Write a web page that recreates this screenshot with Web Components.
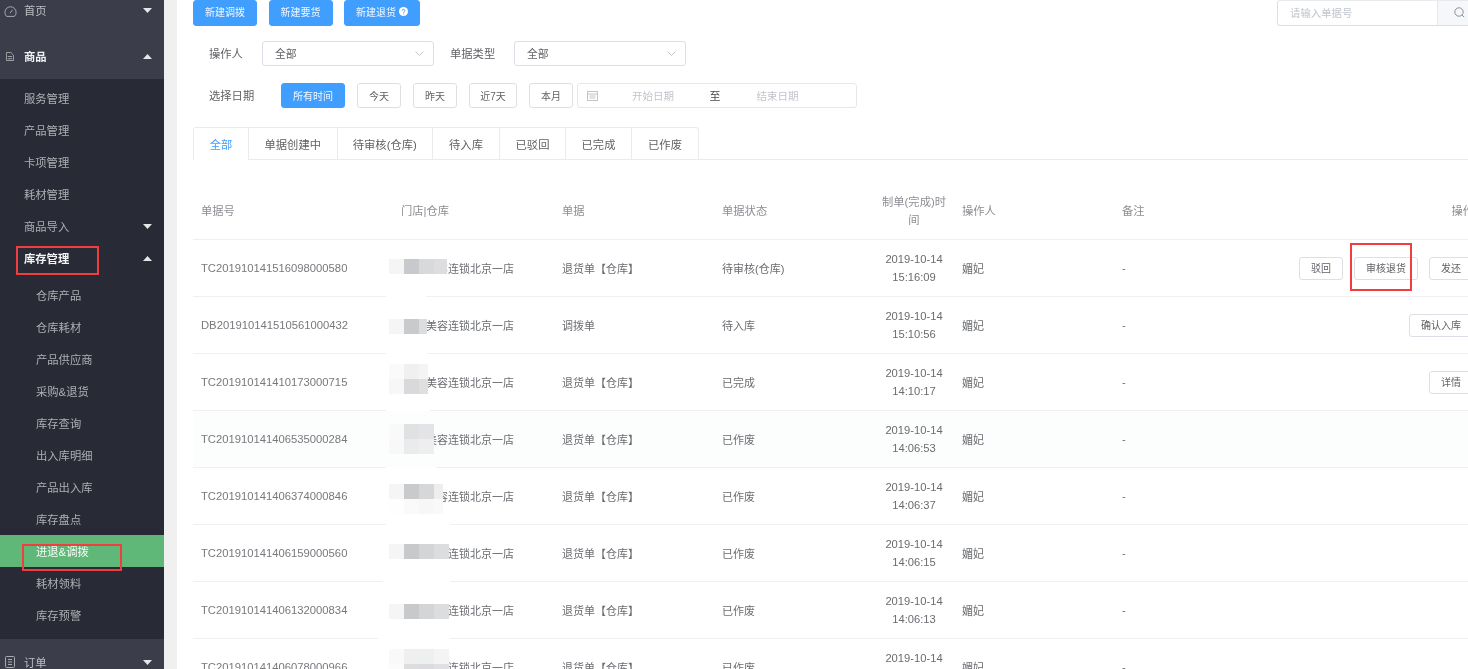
<!DOCTYPE html>
<html lang="zh">
<head>
<meta charset="utf-8">
<title>进退&调拨</title>
<style>
html, body { margin: 0; height: 669px; overflow: hidden; background: #f0f0f1; }
body {
    font-family: "Liberation Sans", "Noto Sans CJK SC", sans-serif;
    color: #606266;
    filter: blur(.5px);
}
#app { display: flex; height: 669px; position: relative; overflow: hidden; }
</style>
</head>
<body>
<div id="app">
    <side-menu>
        <menu-head icon="gauge" caret="down" style="margin-top:-12px;height:45px">首页</menu-head>
        <menu-head icon="doc" caret="up" open>商品</menu-head>
        <menu-group>
            <menu-link>服务管理</menu-link>
            <menu-link>产品管理</menu-link>
            <menu-link>卡项管理</menu-link>
            <menu-link>耗材管理</menu-link>
            <menu-link caret="down">商品导入</menu-link>
            <menu-link caret="up" open>库存管理</menu-link>
            <menu-sub>
                <menu-link deep>仓库产品</menu-link>
                <menu-link deep>仓库耗材</menu-link>
                <menu-link deep>产品供应商</menu-link>
                <menu-link deep>采购&amp;退货</menu-link>
                <menu-link deep>库存查询</menu-link>
                <menu-link deep>出入库明细</menu-link>
                <menu-link deep>产品出入库</menu-link>
                <menu-link deep>库存盘点</menu-link>
                <menu-link deep active>进退&amp;调拨</menu-link>
                <menu-link deep>耗材领料</menu-link>
                <menu-link deep>库存预警</menu-link>
            </menu-sub>
        </menu-group>
        <menu-head icon="list" caret="down">订单</menu-head>
    </side-menu>

    <main-pane>
        <tool-bar>
            <ui-btn primary style="padding-bottom:2px">新建调拨</ui-btn>
            <ui-btn primary style="padding-bottom:2px">新建要货</ui-btn>
            <ui-btn primary help style="padding-bottom:2px">新建退货</ui-btn>
            <search-box slot="end" placeholder="请输入单据号"></search-box>
        </tool-bar>
        <filter-row style="margin-top:16px">
            <filter-label style="width:53px">操作人</filter-label>
            <ui-select value="全部"></ui-select>
            <filter-label style="width:64px;margin-left:16px">单据类型</filter-label>
            <ui-select value="全部"></ui-select>
        </filter-row>
        <filter-row gap>
            <filter-label style="width:60px">选择日期</filter-label>
            <ui-btn primary>所有时间</ui-btn>
            <ui-btn>今天</ui-btn>
            <ui-btn>昨天</ui-btn>
            <ui-btn style="width:48px">近7天</ui-btn>
            <ui-btn>本月</ui-btn>
            <date-range></date-range>
        </filter-row>
        <tab-bar>
            <tab-item active>全部</tab-item>
            <tab-item>单据创建中</tab-item>
            <tab-item>待审核(仓库)</tab-item>
            <tab-item>待入库</tab-item>
            <tab-item>已驳回</tab-item>
            <tab-item>已完成</tab-item>
            <tab-item>已作废</tab-item>
        </tab-bar>
        <bill-table>
            <bill-row no="TC201910141516098000580" type="退货单【仓库】" state="待审核(仓库)" day="2019-10-14" time="15:16:09"
                mask="19|58|f5f5f5,c8c9cc,d8d9db,dddddf" cut="386,40">
                <ui-btn small>驳回</ui-btn><ui-btn small>审核退货</ui-btn><ui-btn small>发还</ui-btn>
            </bill-row>
            <bill-row no="DB201910141510561000432" type="调拨单" state="待入库" day="2019-10-14" time="15:10:56"
                mask="22|38|f5f5f5,c9cacc,dcdde0" cut="386,41">
                <ui-btn small>确认入库</ui-btn>
            </bill-row>
            <bill-row no="TC201910141410173000715" type="退货单【仓库】" state="已完成" day="2019-10-14" time="14:10:17"
                mask="10|39|fafafa,f0f0f1,f4f4f4;f7f7f7,d9d9db,dfdfe0" cut="386,44">
                <ui-btn small>详情</ui-btn>
            </bill-row>
            <bill-row no="TC201910141406535000284" type="退货单【仓库】" state="已作废" day="2019-10-14" time="14:06:53" tint
                mask="13|45|f9f9f9,e0e1e3,e4e4e6;f8f8f8,eaebec,eeeeef" cut="386,50"></bill-row>
            <bill-row no="TC201910141406374000846" type="退货单【仓库】" state="已作废" day="2019-10-14" time="14:06:37"
                mask="16|54|f5f5f5,c9cacc,d6d7d9,eeeeee;fefefe,fafafa,f7f7f7,f9f9f9" cut="386,64"></bill-row>
            <bill-row no="TC201910141406159000560" type="退货单【仓库】" state="已作废" day="2019-10-14" time="14:06:15"
                mask="19|61|f5f5f5,c8c9cb,d4d5d7,dcdddf" cut="383,67"></bill-row>
            <bill-row no="TC201910141406132000834" type="退货单【仓库】" state="已作废" day="2019-10-14" time="14:06:13"
                mask="22|61|f5f5f5,c8c9cb,d4d5d7,dcdddf" cut="378,72"></bill-row>
            <bill-row no="TC201910141406078000966" type="退货单【仓库】" state="已作废" day="2019-10-14" time="14:06:08"
                mask="10|61|f9f9f9,eeefef,eeefef,f4f4f4;fbfbfb,dddddf,dcdcde,e0e0e2"></bill-row>
        </bill-table>
    </main-pane>

    <mark-box x="16" y="246" w="83" h="29"></mark-box>
    <mark-box x="1350" y="243" w="62" h="48"></mark-box>
    <mark-box x="22" y="544" w="100" h="27"></mark-box>
</div>

<script>
// small shared bits for the menu rows
const caretSvg = (dir) => `<svg class="caret" width="9" height="5" viewBox="0 0 9 5">
    <path d="${dir === 'up' ? 'M4.5 0 9 5H0z' : 'M0 0h9L4.5 5z'}" fill="currentColor"/></svg>`;

const menuIcons = {
    gauge: `<svg width="13" height="13" viewBox="0 0 13 13" fill="none" stroke="#a9aab0" stroke-width="1" style="margin-top:2px">
        <path d="M2.6 11.4A5.6 5.6 0 1 1 10.4 11.4Z"/><path d="M6 8.2 8.6 4.8" /></svg>`,
    doc: `<svg width="8" height="9" viewBox="0 0 9 10" fill="none" stroke="#a9aab0" stroke-width="1">
        <path d="M.5.5h5l3 3v6h-8z"/><path d="M2 5h5M2 7.5h5"/></svg>`,
    list: `<svg width="10" height="12" viewBox="0 0 10 12" fill="none" stroke="#a9aab0" stroke-width="1">
        <rect x=".5" y=".5" width="9" height="11" rx="1"/><path d="M3 3.5h4M3 6h4M3 8.5h4"/></svg>`
};

class SideMenu extends HTMLElement {
    constructor() {
        super();
        this.attachShadow({ mode: 'open' });
        this.shadowRoot.innerHTML = `
        <style>
            :host {
                display: flex;
                flex-direction: column;
                flex: 0 0 164px;
                width: 164px;
                height: 669px;
                overflow: hidden;
                background: #282a35;
                font-size: 11.3px;
            }
        </style>
        <slot></slot>`;
    }
}

class MenuHead extends HTMLElement {
    constructor() {
        super();
        this.attachShadow({ mode: 'open' });
        const icon = menuIcons[this.getAttribute('icon')] || '';
        this.shadowRoot.innerHTML = `
        <style>
            :host {
                display: flex;
                flex: none;
                align-items: center;
                height: 46px;
                background: #3b3d4b;
                color: #bdbec3;
            }
            :host([open]) { color: #f0f0f2; font-weight: bold; }
            .ico { display: flex; justify-content: center; width: 24px; margin-left: -2px; margin-right: 2px; }
            .txt { flex: 1; padding-bottom: 1px; }
            .caret { margin-right: 12px; color: #e6e6e9; }
        </style>
        <span class="ico">${icon}</span><span class="txt"><slot></slot></span>${caretSvg(this.getAttribute('caret'))}`;
    }
}

class MenuGroup extends HTMLElement {
    constructor() {
        super();
        this.attachShadow({ mode: 'open' });
        this.shadowRoot.innerHTML = `
        <style>:host { display: block; flex: none; padding-top: 3px; }</style>
        <slot></slot>`;
    }
}

class MenuSub extends HTMLElement {
    constructor() {
        super();
        this.attachShadow({ mode: 'open' });
        this.shadowRoot.innerHTML = `
        <style>:host { display: block; padding: 5px 0 8px; }</style>
        <slot></slot>`;
    }
}

class MenuLink extends HTMLElement {
    constructor() {
        super();
        this.attachShadow({ mode: 'open' });
        const caret = this.getAttribute('caret');
        this.shadowRoot.innerHTML = `
        <style>
            :host {
                display: flex;
                align-items: center;
                height: 32px;
                padding-left: 24px;
                color: #aeafb4;
            }
            :host([deep]) { padding-left: 36px; }
            :host([open]) { color: #f4f4f6; font-weight: bold; }
            :host([active]) { background: #60b878; color: #f6fbf7; }
            .txt { flex: 1; padding-bottom: 1px; }
            .caret { margin-right: 12px; color: #e6e6e9; }
        </style>
        <span class="txt"><slot></slot></span>${caret ? caretSvg(caret) : ''}`;
    }
}

class MainPane extends HTMLElement {
    constructor() {
        super();
        this.attachShadow({ mode: 'open' });
        this.shadowRoot.innerHTML = `
        <style>
            :host {
                display: block;
                flex: 1;
                min-width: 0;
                margin-left: 13px;
                padding-left: 16px;
                background: #fff;
                overflow: hidden;
                font-size: 11.3px;
            }
            .inner { width: 1289px; }
        </style>
        <div class="inner"><slot></slot></div>`;
    }
}

class ToolBar extends HTMLElement {
    constructor() {
        super();
        this.attachShadow({ mode: 'open' });
        this.shadowRoot.innerHTML = `
        <style>
            :host { display: flex; justify-content: space-between; height: 25px; }
            .left { display: flex; gap: 11.5px; }
        </style>
        <div class="left"><slot></slot></div><slot name="end"></slot>`;
    }
}

class UiBtn extends HTMLElement {
    constructor() {
        super();
        this.attachShadow({ mode: 'open' });
        const help = this.hasAttribute('help') ? `<svg width="9" height="9" viewBox="0 0 9 9" style="margin-left:3px">
            <circle cx="4.5" cy="4.5" r="4.5" fill="#fff"/>
            <path d="M3.2 3.6a1.3 1.3 0 1 1 1.9 1.2c-.4.2-.6.4-.6.8M4.5 6.6v.8" fill="none" stroke="#409eff" stroke-width="1"/></svg>` : '';
        this.shadowRoot.innerHTML = `
        <style>
            :host {
                display: inline-flex;
                box-sizing: border-box;
                align-items: center;
                justify-content: center;
                height: 25.5px;
                padding: 0 11px 1px;
                border: 1px solid #dcdfe6;
                border-radius: 3px;
                background: #fff;
                color: #606266;
                font-size: 10px;
                white-space: nowrap;
            }
            :host([primary]) { background: #409eff; border-color: #409eff; color: #f2f8ff; }
            :host([small]) { height: 23px; }
        </style>
        <slot></slot>${help}`;
    }
}

class SearchBox extends HTMLElement {
    constructor() {
        super();
        this.attachShadow({ mode: 'open' });
        this.shadowRoot.innerHTML = `
        <style>
            :host { display: flex; box-sizing: border-box; width: 205px; height: 25.5px; border: 1px solid #dcdfe6; border-top-color: #e8eaee; border-radius: 3px; font-size: 10.4px; }
            .ph { flex: 1; display: flex; align-items: center; padding: 0 0 1px 12px; color: #c0c4cc; }
            .add { display: flex; align-items: center; width: 44px; padding-left: 16px; box-sizing: border-box; background: #f5f7fa; border-left: 1px solid #e4e7ed; }
        </style>
        <div class="ph">${this.getAttribute('placeholder')}</div>
        <div class="add"><svg width="11" height="11" viewBox="0 0 11 11" fill="none" stroke="#8d9095" stroke-width="1">
            <circle cx="5" cy="5" r="4.2"/><path d="M8 8l2.2 2.2"/></svg></div>`;
    }
}

class FilterRow extends HTMLElement {
    constructor() {
        super();
        this.attachShadow({ mode: 'open' });
        this.shadowRoot.innerHTML = `
        <style>
            :host { display: flex; align-items: center; height: 25px; margin-top: 17px; padding-left: 16px; }
            :host([gap]) { gap: 12px; }
        </style>
        <slot></slot>`;
    }
}

class FilterLabel extends HTMLElement {
    constructor() {
        super();
        this.attachShadow({ mode: 'open' });
        this.shadowRoot.innerHTML = `
        <style>:host { display: block; flex: none; color: #606266; padding-bottom: 1px; }</style>
        <slot></slot>`;
    }
}

class UiSelect extends HTMLElement {
    constructor() {
        super();
        this.attachShadow({ mode: 'open' });
        this.shadowRoot.innerHTML = `
        <style>
            :host {
                display: flex;
                box-sizing: border-box;
                align-items: center;
                justify-content: space-between;
                width: 172px;
                height: 25px;
                padding: 0 9px 1px 12px;
                border: 1px solid #dcdfe6;
                border-radius: 3px;
                font-size: 10.8px;
            }
        </style>
        <span>${this.getAttribute('value')}</span>
        <svg width="9" height="5" viewBox="0 0 9 5" fill="none" stroke="#c0c4cc" stroke-width="1"><path d="M.5.5l4 4 4-4"/></svg>`;
    }
}

class DateRange extends HTMLElement {
    constructor() {
        super();
        this.attachShadow({ mode: 'open' });
        this.shadowRoot.innerHTML = `
        <style>
            :host {
                display: flex;
                box-sizing: border-box;
                align-items: center;
                width: 280px;
                height: 25px;
                margin-left: -8px;
                padding: 0 0 1px 9px;
                border: 1px solid #e4e7ed;
                border-radius: 3px;
                font-size: 10.5px;
                color: #c0c4cc;
            }
            .a { margin-left: 34px; }
            .to { margin-left: 35.5px; color: #4a4c50; font-size: 11px; padding-bottom: 1px; }
            .b { margin-left: 36px; }
        </style>
        <svg width="11" height="11" viewBox="0 0 11 11" fill="none" stroke="#c0c4cc" stroke-width="1">
            <rect x=".5" y="1.5" width="10" height="9"/><path d="M.5 4h10M2.5 6h6M2.5 8h6"/></svg>
        <span class="a">开始日期</span><span class="to">至</span><span class="b">结束日期</span>`;
    }
}

class TabBar extends HTMLElement {
    constructor() {
        super();
        this.attachShadow({ mode: 'open' });
        this.shadowRoot.innerHTML = `
        <style>
            :host {
                display: grid;
                box-sizing: border-box;
                grid-template-columns: 56px 88.5px 95.5px 67px 66px 66px 67px 1fr;
                height: 33px;
                margin-top: 19px;
                border-bottom: 1px solid #e9ebef;
            }
        </style>
        <slot></slot>`;
    }
}

class TabItem extends HTMLElement {
    constructor() {
        super();
        this.attachShadow({ mode: 'open' });
        this.shadowRoot.innerHTML = `
        <style>
            :host {
                display: flex;
                box-sizing: border-box;
                align-items: center;
                justify-content: center;
                height: 33px;
                padding-bottom: 1px;
                border-top: 1px solid #e9ebef;
                border-right: 1px solid #e9ebef;
                color: #5f6165;
            }
            :host(:first-child) { border-left: 1px solid #e9ebef; border-top-left-radius: 3px; }
            :host(:nth-child(7)) { border-top-right-radius: 3px; }
            :host([active]) { color: #409eff; background: #fff; }
        </style>
        <slot></slot>`;
    }
}

// column widths shared by the head and the rows
const billColumns = '200px 161px 160px 160px 80px 160px 160px 208px';

class BillTable extends HTMLElement {
    constructor() {
        super();
        this.attachShadow({ mode: 'open' });
        this.shadowRoot.innerHTML = `
        <style>
            :host { display: block; }
            .head {
                display: grid;
                grid-template-columns: ${billColumns};
                align-items: center;
                box-sizing: border-box;
                height: 80px;
                padding-top: 22px;
                border-bottom: 1px solid #eef0f4;
                color: #8c8e93;
                line-height: 18px;
            }
            .head > div { padding: 0 8px; }
            .mid { text-align: center; }
            .end { text-align: right; }
        </style>
        <div class="head">
            <div>单据号</div><div>门店|仓库</div><div>单据</div><div>单据状态</div>
            <div class="mid">制单(完成)时间</div><div>操作人</div><div>备注</div><div class="end">操作</div>
        </div>
        <slot></slot>`;
    }
}

class BillRow extends HTMLElement {
    constructor() {
        super();
        this.attachShadow({ mode: 'open' });
        const a = (n) => this.getAttribute(n) || '';
        this.shadowRoot.innerHTML = `
        <style>
            :host {
                display: grid;
                grid-template-columns: ${billColumns};
                align-items: center;
                position: relative;
                box-sizing: border-box;
                height: 57px;
                padding-bottom: 1px;
                border-bottom: 1px solid #eef0f4;
                color: #6a6c70;
                font-size: 11px;
            }
            :host([tint]) { background: #fcfdfd; }
            .c { padding: 0 8px; }
            .no { font-size: 11.25px; color: #77797d; white-space: nowrap; }
            .store { width: 113px; text-align: right; white-space: nowrap; }
            .time { text-align: center; line-height: 18px; font-size: 11.2px; }
            .ops { display: flex; justify-content: flex-end; gap: 11px; padding: 1px 9px 0 0; }
            pixel-mask { position: absolute; }
            .cut { position: absolute; bottom: -1px; height: 1px; background: #fff; }
        </style>
        <div class="c no">${a('no')}</div>
        <div class="c"><div class="store">美容连锁北京一店</div></div>
        <div class="c">${a('type')}</div>
        <div class="c">${a('state')}</div>
        <div class="time">${a('day')}<br>${a('time')}</div>
        <div class="c">媚妃</div>
        <div class="c">-</div>
        <div class="ops"><slot></slot></div>`;
        const [top, width, cells] = a('mask').split('|');
        const mask = document.createElement('pixel-mask');
        mask.setAttribute('cells', cells);
        mask.style.cssText = `left:196px;top:${top}px;width:${width}px`;
        this.shadowRoot.append(mask);
        if (a('cut')) {
            const [x, w] = a('cut').split(',');
            const cut = document.createElement('div');
            cut.className = 'cut';
            cut.style.cssText = `left:${x - 193}px;width:${w}px`;
            this.shadowRoot.append(cut);
        }
    }
}

// mosaic that hides part of the shop name
class PixelMask extends HTMLElement {
    constructor() {
        super();
        this.attachShadow({ mode: 'open' });
    }

    connectedCallback() {
        const rows = this.getAttribute('cells').split(';').map((r) => r.split(','));
        const html = rows.map((r) => `<div class="r">${r.map((c) => `<i style="background:#${c}"></i>`).join('')}</div>`).join('');
        this.shadowRoot.innerHTML = `
        <style>
            :host { display: block; overflow: hidden; }
            .r { display: flex; height: 15px; }
            i { flex: 0 0 15px; }
        </style>
        ${html}`;
    }
}

// red annotation frames drawn on top of the screenshot
class MarkBox extends HTMLElement {
    constructor() {
        super();
        this.attachShadow({ mode: 'open' });
        const a = (n) => this.getAttribute(n);
        this.shadowRoot.innerHTML = `
        <style>
            :host {
                display: block;
                position: absolute;
                box-sizing: border-box;
                left: ${a('x')}px;
                top: ${a('y')}px;
                width: ${a('w')}px;
                height: ${a('h')}px;
                border: 2px solid #f03e3e;
            }
        </style>`;
    }
}

customElements.define('pixel-mask', PixelMask);
customElements.define('side-menu', SideMenu);
customElements.define('menu-head', MenuHead);
customElements.define('menu-group', MenuGroup);
customElements.define('menu-sub', MenuSub);
customElements.define('menu-link', MenuLink);
customElements.define('main-pane', MainPane);
customElements.define('tool-bar', ToolBar);
customElements.define('ui-btn', UiBtn);
customElements.define('search-box', SearchBox);
customElements.define('filter-row', FilterRow);
customElements.define('filter-label', FilterLabel);
customElements.define('ui-select', UiSelect);
customElements.define('date-range', DateRange);
customElements.define('tab-bar', TabBar);
customElements.define('tab-item', TabItem);
customElements.define('bill-table', BillTable);
customElements.define('bill-row', BillRow);
customElements.define('mark-box', MarkBox);
</script>
</body>
</html>
